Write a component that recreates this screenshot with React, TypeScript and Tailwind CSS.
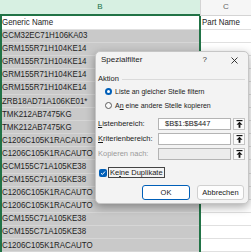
import React from 'react';

const PARTS = [
  'GCM32EC71H106KA03',
  'GRM155R71H104KE14',
  'GRM155R71H104KE14',
  'GRM155R71H104KE14',
  'GRM155R71H104KE14',
  'ZRB18AD71A106KE01*',
  'TMK212AB7475KG',
  'TMK212AB7475KG',
  'C1206C105K1RACAUTO',
  'C1206C105K1RACAUTO',
  'GCM155C71A105KE38',
  'GCM155C71A105KE38',
  'C1206C105K1RACAUTO',
  'C1206C105K1RACAUTO',
  'GCM155C71A105KE38',
  'GCM155C71A105KE38',
  'C1206C105K1RACAUTO',
];

// sheet cells use a narrowed Arial-metric face to stand in for Calibri
const cellText = "font-['Liberation_Sans',sans-serif] text-[9px] leading-none text-[#1e1e1e]";
const narrow = 'origin-left scale-x-[0.88] whitespace-nowrap';

function UpIcon() {
  return (
    <svg width="7" height="8" viewBox="0 0 7 8">
      <rect x="0.5" y="0" width="6" height="1.2" fill="#111" />
      <path d="M3.5 1.8 L6.5 4.8 L0.5 4.8 Z" fill="#111" />
      <rect x="2.6" y="4.6" width="1.8" height="3.2" fill="#111" />
    </svg>
  );
}

function RefRow({ label, value, disabled }: { label: React.ReactNode; value?: string; disabled?: boolean }) {
  return (
    <div className="flex h-[13px] items-center pl-[2px] pr-[3px]">
      <span className={`w-[60px] ${disabled ? 'text-[#9a9a9a]' : ''}`}>{label}</span>
      <div className={`flex h-[12px] w-[73px] items-center border border-[#b4b4b4] pl-[6px] ${disabled ? 'bg-[#ececec]' : 'bg-white'}`}>{value}</div>
      <div className="ml-[2px] flex h-[12px] w-[12px] items-center justify-center border border-[#c4c4c4] bg-[#fbfbfb]"><UpIcon /></div>
    </div>
  );
}

export default function App() {
  return (
    <div className="relative h-[252px] w-[251px] overflow-hidden bg-white">
      {/* column headers */}
      <div className="flex h-[16px]">
        <div className="flex w-[200px] items-center justify-center border-b-2 border-[#217346] bg-[#d7f0e2] pb-[1px] font-['Liberation_Sans',sans-serif] text-[8px] text-[#217346]">B</div>
        <div className="flex flex-1 items-center justify-center border-b border-l border-[#d4d4d4] bg-[#f6f6f6] pb-[1px] font-['Liberation_Sans',sans-serif] text-[8px] text-[#666]">C</div>
      </div>

      {/* sheet body */}
      <div className="flex">
        <div className="w-[201px] border-l-2 border-r-2 border-[#217346]">
          <div className={`flex h-[13.5px] items-center border-b border-[#e0e0e0] bg-white ${cellText}`}>
            <span className={narrow}>Generic Name</span>
          </div>
          {PARTS.map((p, i) => (
            <div key={i} className={`flex h-[13.1px] items-center border-b border-[#d6d6d6] bg-[#c9c9c9] ${cellText}`}>
              <span className={narrow}>{p}</span>
            </div>
          ))}
        </div>
        <div className="flex-1">
          <div className={`flex h-[13.5px] items-center border-b border-[#e0e0e0] pl-[1px] ${cellText}`}>
            <span className={narrow}>Part Name</span>
          </div>
          {PARTS.map((_, i) => (
            <div key={i} className="h-[13.1px] border-b border-[#e0e0e0]" />
          ))}
        </div>
      </div>

      {/* Spezialfilter dialog */}
      <div className="absolute left-[95px] top-[51px] flex h-[153px] w-[154px] flex-col rounded-[5px] border border-[#c6c6c6] bg-[#f3f3f3] font-['Liberation_Sans',sans-serif] text-[7.5px] leading-none text-[#1b1b1b] shadow-[0_3px_10px_rgba(0,0,0,0.35)]">
        <div className="flex h-[16px] items-center pl-[5px] pr-[10px]">
          <span className="text-[8px]">Spezialfilter</span>
          <span className="ml-auto text-[8px] text-[#333]">?</span>
          <svg className="ml-[24px]" width="7" height="7" viewBox="0 0 7 7">
            <path d="M0.5 0.5 L6.5 6.5 M6.5 0.5 L0.5 6.5" stroke="#222" strokeWidth="0.9" />
          </svg>
        </div>

        <div className="mt-[5px] flex h-[12px] items-center pl-[2px] pr-[3px]">
          <span>Aktion</span>
          <div className="ml-[3px] h-px flex-1 bg-[#dadada]" />
        </div>
        <div className="flex h-[13.5px] items-center pl-[9px] text-[7px]">
          <div className="flex h-[7px] w-[7px] items-center justify-center rounded-full bg-[#005fb8]">
            <div className="h-[3px] w-[3px] rounded-full bg-white" />
          </div>
          <span className="ml-[3px]">Liste an gleicher Stelle filtern</span>
        </div>
        <div className="flex h-[13.5px] items-center pl-[9px] text-[7px]">
          <div className="h-[7px] w-[7px] rounded-full border border-[#5c5c5c] bg-[#fafafa]" />
          <span className="ml-[3px]">A<u>n</u> eine andere Stelle kopieren</span>
        </div>

        <div className="mt-[5px] flex flex-col gap-[2px]">
          <RefRow label={<><u>L</u>istenbereich:</>} value="$B$1:$B$447" />
          <RefRow label={<><u>K</u>riterienbereich:</>} />
          <RefRow label="Kopieren nach:" disabled />
        </div>

        <div className="mt-[6.5px] flex h-[12px] items-center pl-[3px]">
          <div className="flex h-[8px] w-[8px] items-center justify-center rounded-[2px] bg-[#005fb8]">
            <svg width="6" height="6" viewBox="0 0 6 6">
              <path d="M1 3.2 L2.4 4.5 L5 1.5" fill="none" stroke="white" strokeWidth="1" />
            </svg>
          </div>
          <span className="ml-[1px] flex h-[11px] items-center border border-[#444] px-[1px]">Ke<u>i</u>ne Duplikate</span>
        </div>

        <div className="mt-[6.5px] flex justify-end gap-[7px] pr-[4px]">
          <button className="flex h-[15px] w-[48px] items-center justify-center rounded-[3px] border-[1.5px] border-[#005fb8] bg-white">OK</button>
          <button className="flex h-[15px] w-[47px] items-center justify-center rounded-[3px] border border-[#d0d0d0] bg-[#fdfdfd]">Abbrechen</button>
        </div>
      </div>
    </div>
  );
}
